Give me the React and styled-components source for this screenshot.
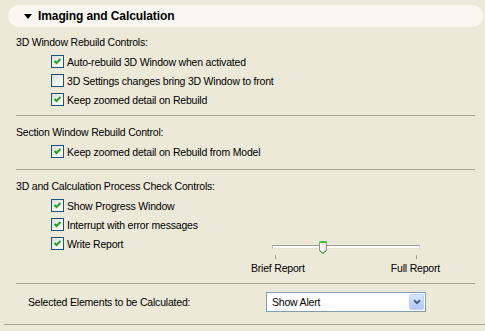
import styled, { createGlobalStyle } from "styled-components";

const GlobalStyle = createGlobalStyle`
  body {
    margin: 0;
    background: #ece9d8;
    font-family: "Liberation Sans", Arial, sans-serif;
    font-size: 10.5px;
    letter-spacing: -0.2px;
    color: #000;
  }
`;

const Panel = styled.div`
  width: 485px;
  height: 331px;
  padding-top: 5px;
  box-sizing: border-box;
  background: #ece9d8;
  overflow: hidden;
`;

const Header = styled.div`
  display: flex;
  align-items: center;
  gap: 6px;
  height: 22px;
  margin: 0 2px 0 8px;
  padding-left: 16px;
  border-radius: 11px;
  background: #f7f6ef;
  font-size: 12px;
  font-weight: bold;
  letter-spacing: -0.1px;
`;

const Triangle = styled.span`
  width: 0;
  height: 0;
  border-left: 4.5px solid transparent;
  border-right: 4.5px solid transparent;
  border-top: 5px solid #000;
  margin-top: 1px;
`;

const Section = styled.div`
  padding: ${(p) => p.$pad || "6px 0 6px 0"};
`;

const Title = styled.div`
  height: 19px;
  line-height: 19px;
  padding-left: 16px;
`;

const Row = styled.div`
  display: flex;
  align-items: flex-start;
  padding-left: 51px;
  min-height: 19px;
`;

const CheckLine = styled.label`
  display: flex;
  align-items: center;
  gap: 3px;
  height: 19px;
  width: ${(p) => p.$width || "auto"};
  white-space: nowrap;
`;

const Box = styled.span`
  display: flex;
  align-items: center;
  justify-content: center;
  width: 11px;
  height: 11px;
  border: 1px solid #1c5180;
  background: linear-gradient(135deg, #dcdcd7 0%, #f4f4f0 60%, #ffffff 100%);
`;

const Rule = styled.div`
  height: 1px;
  background: #aca899;
  margin: ${(p) => (p.$full ? "0 0 0 4px" : "0 10px 0 16px")};
`;

const SliderBlock = styled.div`
  width: 189px;
  padding-top: 7px;
`;

const TrackArea = styled.div`
  position: relative;
  height: 14px;
  margin: 0 20px 0 21px;
`;

const Track = styled.div`
  position: relative;
  top: 4px;
  height: 2px;
  border-top: 1px solid #9d9b91;
  border-bottom: 1px solid #e3e1d6;
  border-left: 1px solid #b9b7ac;
  border-right: 1px solid #d6d4c9;
  background: #ffffff;
  border-radius: 1px;
`;

const Thumb = styled.svg`
  position: absolute;
  top: 0;
`;

const Ticks = styled.div`
  display: flex;
  justify-content: space-between;
  height: 4px;
  padding: 0 23px 0 24px;
`;

const Tick = styled.span`
  width: 1px;
  height: 4px;
  background: #a19f95;
`;

const SliderLabels = styled.div`
  display: flex;
  justify-content: space-between;
  margin-top: 3px;
  line-height: 13px;
`;

const SelectRow = styled.div`
  display: flex;
  align-items: center;
  padding-left: 28px;
`;

const SelectLabel = styled.span`
  width: 238px;
`;

const Select = styled.div`
  display: flex;
  align-items: center;
  justify-content: space-between;
  width: 160px;
  height: 20px;
  box-sizing: border-box;
  padding: 1px 1px 1px 5px;
  border: 1px solid #7f9db9;
  background: #fff;
`;

const DropButton = styled.span`
  display: flex;
  align-items: center;
  justify-content: center;
  width: 15px;
  height: 16px;
  box-sizing: border-box;
  border: 1px solid #bcd0f8;
  border-radius: 2px;
  background: linear-gradient(180deg, #dae6fe 0%, #c2d4fb 50%, #b3c8f6 100%);
`;

const Check = ({ checked }) => (
  <Box>
    {checked && (
      <svg width="9" height="9" viewBox="0 0 9 9">
        <path d="M1.5 4 L3.5 6 L7.5 2" fill="none" stroke="#21a121" strokeWidth="2" />
      </svg>
    )}
  </Box>
);

const CheckItem = ({ checked, children, width }) => (
  <CheckLine $width={width}>
    <Check checked={checked} />
    {children}
  </CheckLine>
);

const Slider = ({ value }) => (
  <SliderBlock>
    <TrackArea>
      <Track />
      <Thumb
        width="8"
        height="13"
        viewBox="0 0 8 13"
        style={{ left: `${Math.round(value * 140)}px` }}
      >
        <defs>
          <linearGradient id="thumbFill" x1="0" y1="0" x2="1" y2="0">
            <stop offset="0" stopColor="#ffffff" />
            <stop offset="1" stopColor="#e4e3dc" />
          </linearGradient>
        </defs>
        <path
          d="M0.5 1.5 V9 L4 12.5 L7.5 9 V1.5 Z"
          fill="url(#thumbFill)"
          stroke="#9a9990"
        />
        <path d="M0.5 1 H7.5" stroke="#43c343" strokeWidth="2" />
        <path d="M0.5 9.5 L4 12.5 L7.5 9.5" fill="none" stroke="#21a121" />
      </Thumb>
    </TrackArea>
    <Ticks>
      <Tick />
      <Tick />
    </Ticks>
    <SliderLabels>
      <span>Brief Report</span>
      <span>Full Report</span>
    </SliderLabels>
  </SliderBlock>
);

export default function App() {
  return (
    <Panel>
      <GlobalStyle />
      <Header>
        <Triangle />
        Imaging and Calculation
      </Header>

      <Section $pad="6px 0 6px 0">
        <Title>3D Window Rebuild Controls:</Title>
        <Row>
          <CheckItem checked>Auto-rebuild 3D Window when activated</CheckItem>
        </Row>
        <Row>
          <CheckItem>3D Settings changes bring 3D Window to front</CheckItem>
        </Row>
        <Row>
          <CheckItem checked>Keep zoomed detail on Rebuild</CheckItem>
        </Row>
      </Section>
      <Rule />

      <Section $pad="7px 0 8px 0">
        <Title>Section Window Rebuild Control:</Title>
        <Row>
          <CheckItem checked>Keep zoomed detail on Rebuild from Model</CheckItem>
        </Row>
      </Section>
      <Rule />

      <Section $pad="7px 0 8px 0">
        <Title>3D and Calculation Process Check Controls:</Title>
        <Row>
          <CheckItem checked>Show Progress Window</CheckItem>
        </Row>
        <Row>
          <CheckItem checked>Interrupt with error messages</CheckItem>
        </Row>
        <Row>
          <CheckItem checked width="200px">
            Write Report
          </CheckItem>
          <Slider value={0.336} />
        </Row>
      </Section>
      <Rule />

      <Section $pad="8px 0 12px 0">
        <SelectRow>
          <SelectLabel>Selected Elements to be Calculated:</SelectLabel>
          <Select>
            <span>Show Alert</span>
            <DropButton>
              <svg width="8" height="6" viewBox="0 0 8 6">
                <path d="M1 1.2 L4 4.2 L7 1.2" fill="none" stroke="#4d6185" strokeWidth="2" />
              </svg>
            </DropButton>
          </Select>
        </SelectRow>
      </Section>
      <Rule $full />
    </Panel>
  );
}
